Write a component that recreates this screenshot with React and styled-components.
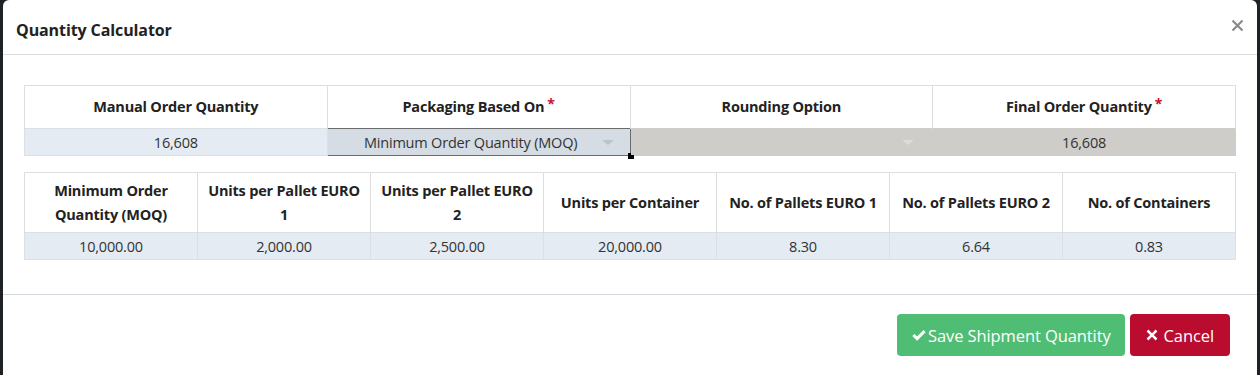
import React from "react";
import styled, { createGlobalStyle } from "styled-components";

const Global = createGlobalStyle`
  html, body { margin: 0; padding: 0; }
  body {
    background: #1e2226;
    font-family: "Open Sans", "Noto Sans", Arial, sans-serif;
    color: #333;
    overflow: hidden;
  }
`;

const Modal = styled.div`
  margin: 0 3px;
  width: 1254px;
  height: 375px;
  background: #fff;
  border-radius: 6px 6px 0 0;
  display: flex;
  flex-direction: column;
`;

const Header = styled.div`
  height: 55px;
  box-sizing: border-box;
  border-bottom: 1px solid #dcdcdc;
  display: flex;
  align-items: center;
  justify-content: space-between;
  padding: 6px 12px 0 13px;
`;

const Title = styled.h4`
  margin: 0;
  font-size: 16px;
  font-weight: 700;
  color: #222;
  letter-spacing: -0.1px;
`;

const Close = styled.button`
  border: 0;
  background: none;
  padding: 0;
  width: 16px;
  height: 16px;
  margin-top: -10px;
  cursor: pointer;
  display: flex;
  align-items: center;
  justify-content: center;
`;

const Body = styled.div`
  padding: 30px 21px 0 21px;
  height: 240px;
  box-sizing: border-box;
  border-bottom: 1px solid #d3d9de;
  display: flex;
  flex-direction: column;
  gap: 16px;
`;

const Table = styled.table`
  width: 100%;
  border-collapse: collapse;
  table-layout: fixed;
  font-size: 14.5px;
`;

const Th = styled.th`
  border: 1px solid #dedede;
  border-bottom: 0;
  height: ${(p) => p.$h}px;
  padding: 0 8px;
  font-weight: 700;
  color: #222;
  line-height: 24px;
  text-align: center;
  vertical-align: middle;
  letter-spacing: -0.2px;
`;

const Req = styled.span`
  color: #c8102e;
  font-size: 14px;
  margin-left: 3px;
  vertical-align: 3px;
  line-height: 0;
`;

const Td = styled.td`
  border: 1px solid ${(p) => (p.$gray ? "#cfcdca" : "#dcdfe3")};
  background: ${(p) => (p.$gray ? "#cfcdca" : "#e4ebf2")};
  height: 26px;
  padding: 0;
  text-align: center;
  color: #333;
  position: relative;
  letter-spacing: -0.2px;
`;

const SelectCell = styled.td`
  border: 1px solid #6b6b6b;
  background: #d5dce3;
  height: 26px;
  padding: 0;
  position: relative;
  text-align: center;
  color: #333;
  letter-spacing: -0.2px;
`;

const SelectText = styled.span`
  display: inline-block;
  margin-right: 16px;
`;

const Arrow = styled.span`
  position: absolute;
  right: ${(p) => p.$right}px;
  top: 11px;
  width: 0;
  height: 0;
  border-left: 6px solid transparent;
  border-right: 6px solid transparent;
  border-top: 5px solid ${(p) => p.$color};
`;

const Handle = styled.span`
  position: absolute;
  right: -4px;
  bottom: -4px;
  width: 6px;
  height: 6px;
  background: #000;
`;

const Footer = styled.div`
  flex: 1;
  display: flex;
  justify-content: flex-end;
  align-items: flex-start;
  padding: 19px 27px 0 0;
  gap: 5px;
`;

const Button = styled.button`
  height: 42px;
  border: 0;
  border-radius: 4px;
  background: ${(p) => p.$bg};
  color: #fff;
  font-family: inherit;
  font-size: 16.5px;
  padding: 0 ${(p) => p.$px}px;
  display: flex;
  align-items: center;
  gap: ${(p) => p.$gap}px;
  cursor: pointer;
  letter-spacing: -0.1px;
`;

const Check = () => (
  <svg width="16" height="13" viewBox="0 0 15 13">
    <path d="M0.8 7 L2.9 4.9 L5.6 7.6 L12.1 1.1 L14.2 3.2 L5.6 11.8 Z" fill="#fff" />
  </svg>
);

const XIcon = () => (
  <svg width="12" height="12" viewBox="0 0 12 12">
    <path
      d="M2.4 0.6 L6 4.2 L9.6 0.6 L11.4 2.4 L7.8 6 L11.4 9.6 L9.6 11.4 L6 7.8 L2.4 11.4 L0.6 9.6 L4.2 6 L0.6 2.4 Z"
      fill="#fff"
    />
  </svg>
);

const CloseX = () => (
  <svg width="13" height="13" viewBox="0 0 13 13">
    <path d="M1.5 1.5 L11.5 11.5 M11.5 1.5 L1.5 11.5" stroke="#8a8a8a" strokeWidth="2.2" />
  </svg>
);

const details = [
  ["Minimum Order Quantity (MOQ)", "10,000.00"],
  ["Units per Pallet EURO 1", "2,000.00"],
  ["Units per Pallet EURO 2", "2,500.00"],
  ["Units per Container", "20,000.00"],
  ["No. of Pallets EURO 1", "8.30"],
  ["No. of Pallets EURO 2", "6.64"],
  ["No. of Containers", "0.83"],
];

export default function App() {
  return (
    <>
      <Global />
      <Modal>
        <Header>
          <Title>Quantity Calculator</Title>
          <Close aria-label="Close">
            <CloseX />
          </Close>
        </Header>
        <Body>
          <Table>
            <thead>
              <tr>
                <Th $h={42}>Manual Order Quantity</Th>
                <Th $h={42}>
                  Packaging Based On<Req>*</Req>
                </Th>
                <Th $h={42}>Rounding Option</Th>
                <Th $h={42}>
                  Final Order Quantity<Req>*</Req>
                </Th>
              </tr>
            </thead>
            <tbody>
              <tr>
                <Td>16,608</Td>
                <SelectCell>
                  <SelectText>Minimum Order Quantity (MOQ)</SelectText>
                  <Arrow $right={16} $color="#bcc3ca" />
                  <Handle />
                </SelectCell>
                <Td $gray>
                  <Arrow $right={18} $color="#dcdbd8" />
                </Td>
                <Td $gray>16,608</Td>
              </tr>
            </tbody>
          </Table>
          <Table>
            <thead>
              <tr>
                {details.map(([h]) => (
                  <Th key={h} $h={59}>
                    {h}
                  </Th>
                ))}
              </tr>
            </thead>
            <tbody>
              <tr>
                {details.map(([h, v]) => (
                  <Td key={h}>{v}</Td>
                ))}
              </tr>
            </tbody>
          </Table>
        </Body>
        <Footer>
          <Button $bg="#50bd74" $px={14} $gap={1}>
            <Check />
            Save Shipment Quantity
          </Button>
          <Button $bg="#ba0c2f" $px={16} $gap={6}>
            <XIcon />
            Cancel
          </Button>
        </Footer>
      </Modal>
    </>
  );
}
